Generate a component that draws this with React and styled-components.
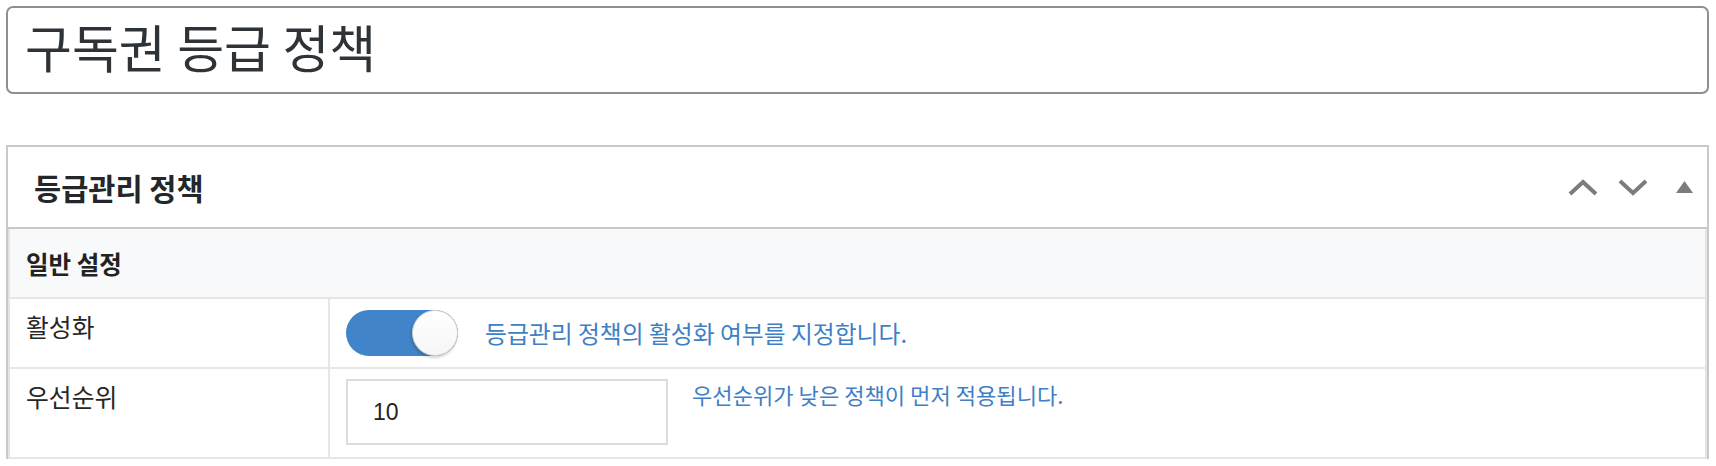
import React from "react";
import styled, { createGlobalStyle } from "styled-components";

const GlobalStyle = createGlobalStyle`
  html, body {
    margin: 0;
    padding: 0;
    background: #ffffff;
  }
  body {
    font-family: "Noto Sans CJK KR", "Noto Sans", "Liberation Sans", sans-serif;
    color: #222222;
  }
  * { box-sizing: border-box; }
`;

const Page = styled.div`
  padding: 6px 7px 0 6px;
`;

const TitleBox = styled.div`
  height: 88px;
  border: 2px solid #8e8e93;
  border-radius: 7px;
  display: flex;
  align-items: center;
  padding: 0 0 6px 17px;
`;

const Title = styled.h1`
  margin: 0;
  font-size: 51px;
  font-weight: 400;
  color: #2e3338;
  line-height: 1.2;
`;

const Panel = styled.section`
  margin-top: 51px;
  border: 2px solid #c9c9c9;
  border-bottom: none;
`;

const PanelHeader = styled.header`
  height: 82px;
  border-bottom: 2px solid #c9c9c9;
  display: flex;
  align-items: center;
  justify-content: space-between;
  padding: 0 14px 0 26px;
`;

const PanelTitle = styled.h2`
  margin: 0;
  font-size: 29.5px;
  font-weight: 700;
  color: #23272b;
`;

const Tools = styled.div`
  display: flex;
  align-items: center;
`;

const ToolIcon = styled.svg`
  display: block;
  margin-left: ${(p) => p.$gap}px;
  color: #7a7d80;
`;

const Table = styled.div`
  border-left: 2px solid #e4e4e4;
  border-right: 2px solid #e4e4e4;
`;

const SectionRow = styled.div`
  height: 70px;
  background: #f8f9fa;
  border-bottom: 2px solid #e6e6e6;
  display: flex;
  align-items: center;
  padding-left: 16px;
  font-size: 24.5px;
  font-weight: 700;
  color: #222;
`;

const Row = styled.div`
  display: grid;
  grid-template-columns: 318px 1fr;
  min-height: ${(p) => p.$height}px;
  border-bottom: 2px solid #e6e6e6;
`;

const LabelCell = styled.div`
  padding: 10px 16px 0 16px;
  font-size: 24.8px;
  line-height: 34px;
  color: #262626;
`;

const ValueCell = styled.div`
  border-left: 2px solid #e6e6e6;
  padding: ${(p) => p.$pad};
  display: flex;
  align-items: ${(p) => p.$align};
  gap: ${(p) => p.$gap}px;
`;

const Switch = styled.div`
  width: 112px;
  height: 46px;
  border-radius: 23px;
  background: #4184c9;
  display: flex;
  justify-content: flex-end;
  flex: none;
`;

const Knob = styled.div`
  width: 46px;
  height: 46px;
  border-radius: 50%;
  background: linear-gradient(180deg, #ffffff 0%, #f6f6f6 100%);
  border: 1px solid #d6d6d6;
  box-shadow: -1px 2px 3px rgba(0, 0, 0, 0.18);
`;

const Help = styled.span`
  color: #3f7fc6;
  font-size: ${(p) => p.$size}px;
  line-height: ${(p) => p.$lh}px;
`;

const NumberInput = styled.input`
  width: 322px;
  height: 66px;
  flex: none;
  border: 2px solid #dcdcdc;
  border-radius: 0;
  padding: 0 0 0 25px;
  font-family: "Liberation Sans", Arial, sans-serif;
  font-size: 23px;
  color: #222;
  background: #fff;
  outline: none;
`;

const ChevronUp = () => (
  <ToolIcon $gap={0} width="30" height="17" viewBox="0 0 30 17">
    <polyline points="2,15 15,3 28,15" fill="none" stroke="currentColor" strokeWidth="4" />
  </ToolIcon>
);

const ChevronDown = () => (
  <ToolIcon $gap={20} width="30" height="17" viewBox="0 0 30 17">
    <polyline points="2,2 15,14 28,2" fill="none" stroke="currentColor" strokeWidth="4" />
  </ToolIcon>
);

const Triangle = () => (
  <ToolIcon $gap={28} width="17" height="12" viewBox="0 0 17 12">
    <polygon points="8.5,0 17,12 0,12" fill="currentColor" />
  </ToolIcon>
);

export default function App() {
  return (
    <>
      <GlobalStyle />
      <Page>
        <TitleBox>
          <Title>구독권 등급 정책</Title>
        </TitleBox>
        <Panel>
          <PanelHeader>
            <PanelTitle>등급관리 정책</PanelTitle>
            <Tools>
              <ChevronUp />
              <ChevronDown />
              <Triangle />
            </Tools>
          </PanelHeader>
          <Table>
            <SectionRow>일반 설정</SectionRow>
            <Row $height={70}>
              <LabelCell>활성화</LabelCell>
              <ValueCell $pad="11px 16px" $align="center" $gap={27}>
                <Switch>
                  <Knob />
                </Switch>
                <Help $size={23.8} $lh={32}>
                  등급관리 정책의 활성화 여부를 지정합니다.
                </Help>
              </ValueCell>
            </Row>
            <Row $height={90}>
              <LabelCell>우선순위</LabelCell>
              <ValueCell $pad="10px 16px 12px" $align="flex-start" $gap={24}>
                <NumberInput defaultValue="10" />
                <Help $size={22.1} $lh={30}>
                  우선순위가 낮은 정책이 먼저 적용됩니다.
                </Help>
              </ValueCell>
            </Row>
          </Table>
        </Panel>
      </Page>
    </>
  );
}
